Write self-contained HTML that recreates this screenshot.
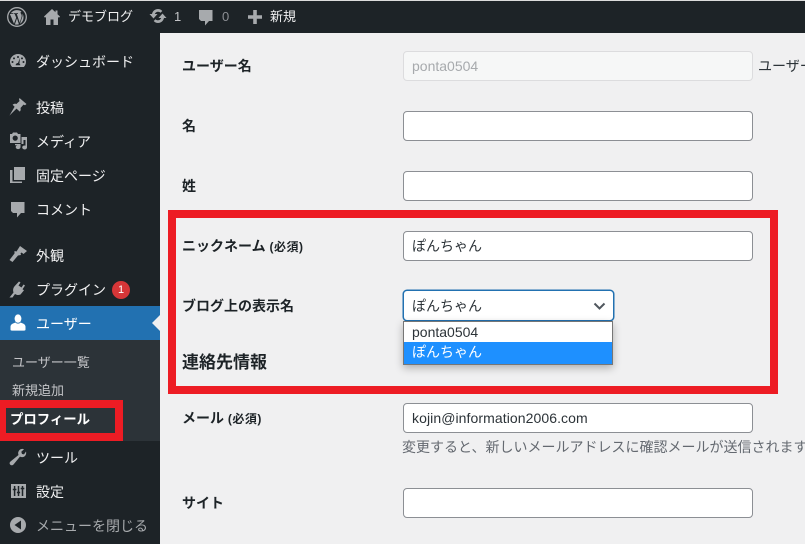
<!DOCTYPE html>
<html><head><meta charset="utf-8"><style>
html,body{margin:0;padding:0;width:805px;height:544px;overflow:hidden;background:#f0f0f1}
body{position:relative;font-family:"Liberation Sans","Noto Sans CJK JP",sans-serif;font-size:14px;color:#1d2327}
.a{position:absolute;white-space:nowrap}
.t{position:absolute;white-space:nowrap;line-height:20px}
.m{margin-top:1px}
.w{color:#f0f0f1}
.l{font-weight:700;left:182px;color:#1d2327}
.r{font-size:12px;letter-spacing:.5px}
.i{position:absolute;left:403px;width:350px;height:30px;box-sizing:border-box;background:#fff;border:1px solid #8c8f94;border-radius:4px;padding-left:8px;line-height:29px;color:#2c3338;overflow:hidden;white-space:nowrap}
svg{position:absolute;display:block}
.ic{fill:#a7aaad}
</style></head><body>
<div class="a" style="left:0;top:0;width:805px;height:33px;background:#1d2327"></div>
<div class="a" style="left:0;top:0;width:805px;height:1px;background:#dcdcdc"></div>
<div class="a" style="left:0;top:33px;width:160px;height:511px;background:#1d2327"></div>
<div class="a" style="left:0;top:306px;width:160px;height:34px;background:#2271b1"></div>
<div class="a" style="left:0;top:340px;width:160px;height:101px;background:#2c3338"></div>
<svg style="left:152px;top:315px" width="8" height="16"><path d="M8 0L0 8L8 16Z" fill="#f0f0f1"/></svg>

<!-- top bar -->
<svg style="left:7px;top:7px" width="20" height="20" viewBox="0 0 20 20"><circle cx="10" cy="10" r="9.3" fill="none" stroke="#a7aaad" stroke-width="1.3"/><path d="M3 7.2 7 16.8 9.2 10.6 7.7 7H6.6V6.2H11V7H9.8L12.7 15.8 14.3 10.8C15 8.6 14.6 7.6 13.8 6.5 13.2 5.6 13.7 4.8 14.6 4.6 12 2.4 6.5 2.4 3.8 6.2H6V7H3ZM10 11.2 7.9 17.4C9.2 17.8 10.6 17.7 11.9 17.3ZM15.5 6.6C15.7 8.5 15.5 9.6 14.8 11.4L13 16.8C16.4 14.8 17.6 10.2 15.5 6.6Z" fill="#a7aaad"/></svg>
<svg style="left:44px;top:9px" width="16" height="16" viewBox="0 0 16 16"><path d="M8 0L0 7.5 1 8.7 2 8V16H6.5V10.5H9.5V16H14V8L15 8.7 16 7.5 13.5 5.2V1.5H11.5V3.3Z" class="ic"/></svg>
<div class="t w" style="left:68px;top:7px;font-size:13px">デモブログ</div>
<svg style="left:149px;top:7px" width="18" height="19" viewBox="0 1 18 16"><path d="M9 1.5C6 1.5 3.6 3.6 3 6.5H.5L4.5 11 8.5 6.5H5.8C6.4 5 7.6 4.2 9 4.2 10 4.2 10.9 4.6 11.5 5.3L13.3 3.5C12.2 2.3 10.7 1.5 9 1.5ZM13.5 6L9.5 10.5H12.2C11.6 12 10.4 12.8 9 12.8 8 12.8 7.1 12.4 6.5 11.7L4.7 13.5C5.8 14.7 7.3 15.5 9 15.5 12 15.5 14.4 13.4 15 10.5H17.5Z" class="ic"/></svg>
<div class="t" style="left:174px;top:7px;font-size:13px;color:#c3c4c7">1</div>
<svg style="left:198px;top:10px" width="16" height="16" viewBox="0 0 16 16"><path d="M1 0H14.5V11H11L7 15.5V11H3L1 9Z" class="ic"/></svg>
<div class="t" style="left:222px;top:7px;font-size:13px;color:#8c8f94">0</div>
<svg style="left:248px;top:10px" width="14" height="14" viewBox="0 0 14 14"><path d="M5.2 0H8.8V5.2H14V8.8H8.8V14H5.2V8.8H0V5.2H5.2Z" class="ic"/></svg>
<div class="t w" style="left:270px;top:7px;font-size:13px">新規</div>

<!-- menu -->
<svg style="left:10px;top:54px" width="16" height="14" viewBox="0 0 16 14"><path d="M8 0C3.6 0 0 3.4 0 7.6 0 9.6.8 11.5 2.2 13H13.8C15.2 11.5 16 9.6 16 7.6 16 3.4 12.4 0 8 0ZM8 2A1 1 0 1 1 8 4 1 1 0 0 1 8 2ZM4 3.4A1 1 0 1 1 4 5.4 1 1 0 0 1 4 3.4ZM12 3.4A1 1 0 1 1 12 5.4 1 1 0 0 1 12 3.4ZM2.5 7A1 1 0 1 1 2.5 9 1 1 0 0 1 2.5 7ZM13.5 7A1 1 0 1 1 13.5 9 1 1 0 0 1 13.5 7ZM10 3.8L9.4 9.6C10 10 10.3 10.6 10.3 11.2H5.7C5.7 9.9 6.8 9 8 9Z" class="ic" fill-rule="evenodd"/></svg>
<div class="t w m" style="left:36px;top:51px">ダッシュボード</div>
<svg style="left:9px;top:98px" width="18" height="18" viewBox="0 0 18 18"><path d="M10.5 0L17.5 6 16 7.2 14.5 6.6 11.5 10C12 11.6 11.6 12.8 10.8 13.6L7.5 10.6 0.5 17.5 5.6 8.8 3.6 6.8C4.8 5.8 6 5.6 7.4 6L10.6 3 10 1.6Z" class="ic"/></svg>
<div class="t w m" style="left:36px;top:97px">投稿</div>
<svg style="left:9px;top:132px" width="18" height="18" viewBox="0 0 18 18"><path d="M1 2H3L4 .5H8L9 2H11.5V11H1ZM6.2 3.5A2.6 2.6 0 1 0 6.2 8.7 2.6 2.6 0 0 0 6.2 3.5ZM12.5 5H18V15.5A2.4 2 0 1 1 16.5 13.6V8H14.5V12H12.5ZM6 12H11.5V15A2.4 2 0 1 1 9.8 13.2H6Z" class="ic" fill-rule="evenodd"/></svg>
<div class="t w m" style="left:36px;top:131px">メディア</div>
<svg style="left:10px;top:167px" width="15" height="16" viewBox="0 0 15 16"><path d="M4 0H15V13H4ZM0 3H2.5V14.5H12V16H0Z" class="ic"/></svg>
<div class="t w m" style="left:36px;top:165px">固定ページ</div>
<svg style="left:10px;top:202px" width="16" height="16" viewBox="0 0 16 16"><path d="M1 0H14.5V11H11L7 15.5V11H3L1 9Z" class="ic"/></svg>
<div class="t w m" style="left:36px;top:199px">コメント</div>
<svg style="left:9px;top:246px" width="18" height="17" viewBox="0 0 18 17"><path d="M11 0L18 5 14.5 8 12.5 6.5 11.5 7.5 12 9 9 9.5 3.5 16 .5 14 5.5 7.5 5.5 5 7.5 5.5Z" class="ic"/></svg>
<div class="t w m" style="left:36px;top:245px">外観</div>
<svg style="left:9px;top:281px" width="18" height="17" viewBox="0 0 18 17"><path d="M10 .5L11.5 1.5 9.5 4.5 12.5 6.5 14.5 3.5 16 4.5 13.5 8.2 15 9.2 11.5 13.5C9.5 14.5 7.5 14 6 13L3.5 16.5H.5L4.5 11.5C3.8 9.5 4 7.5 5 6L6 4.8Z" class="ic"/></svg>
<div class="t w m" style="left:36px;top:279px">プラグイン</div>
<div class="a" style="left:112px;top:281px;width:18px;height:18px;border-radius:50%;background:#d63638;color:#fff;font-size:11px;line-height:18px;text-align:center">1</div>
<svg style="left:10px;top:314px" width="16" height="17" viewBox="0 0 16 17"><ellipse cx="8" cy="4.6" rx="3.4" ry="4.2" fill="#fff"/><path d="M5.5 8.5C3 9.5.8 10 .5 12.5V15.5C.5 16.3 1 16.6 2 16.6H14C15 16.6 15.5 16.3 15.5 15.5V12.5C15.2 10 13 9.5 10.5 8.5 9.5 10 6.5 10 5.5 8.5Z" fill="#fff"/></svg>
<div class="t m" style="left:36px;top:313px;color:#fff">ユーザー</div>
<div class="t m" style="left:12px;top:352px;font-size:13px;color:#c3c4c7">ユーザー一覧</div>
<div class="t m" style="left:12px;top:380px;font-size:13px;color:#c3c4c7">新規追加</div>
<div class="t m" style="left:10px;top:409px;font-size:13.4px;font-weight:700;color:#fff">プロフィール</div>
<svg style="left:9px;top:448px" width="18" height="18" viewBox="0 0 18 18"><path d="M17 3.5C17.6 6 16.5 8.4 14.2 9 13 9.3 12 9.2 11 8.6L4.5 16.5C3.5 17.5 2 17.5 1.2 16.6.3 15.7.4 14.3 1.5 13.5L9.5 7C8.9 5.5 9 4 10 2.6 11.2 1 13.4.5 15 1.2L12.3 3.8 13 6 15 6.4Z" class="ic"/></svg>
<div class="t w m" style="left:36px;top:447px">ツール</div>
<svg style="left:11px;top:484px" width="15" height="14" viewBox="0 0 15 14"><rect width="15" height="14" class="ic"/><path d="M3.6 2V12M1.8 5.5H5.4M7.5 2V12M5.9 8.5H9.1M11.5 2V12M9.7 4.5H13.3" fill="none" stroke="#1d2327" stroke-width="1.5"/></svg>
<div class="t w m" style="left:36px;top:481px">設定</div>
<svg style="left:10px;top:517px" width="16" height="16" viewBox="0 0 16 16"><path d="M8 0A8 8 0 1 0 8 16 8 8 0 0 0 8 0ZM11 3.5V12.5L4.5 8Z" class="ic" fill-rule="evenodd"/></svg>
<div class="t m" style="left:36px;top:515px;color:#a7aaad">メニューを閉じる</div>

<!-- form -->
<div class="t l" style="top:56px">ユーザー名</div>
<div class="i" style="top:51px;background:#f6f7f7;border-color:#dcdcde;color:#a7aaad">ponta0504</div>
<div class="t" style="left:758px;top:56px;width:47px;overflow:hidden;color:#2c3338">ユーザー名は変更できません。</div>
<div class="t l" style="top:116px">名</div>
<div class="i" style="top:111px"></div>
<div class="t l" style="top:176px">姓</div>
<div class="i" style="top:171px"></div>
<div class="t l" style="top:236px">ニックネーム <span class="r">(必須)</span></div>
<div class="i" style="top:231px">ぽんちゃん</div>
<div class="t l" style="top:296px">ブログ上の表示名</div>
<div class="i" style="top:290px;width:211px;height:31px;border-color:#2271b1;box-shadow:0 0 0 .5px #2271b1;line-height:30px">ぽんちゃん</div>
<svg style="left:593px;top:302px" width="13" height="9" viewBox="0 0 13 9"><path d="M1.5 1.5L6.5 6.5 11.5 1.5" fill="none" stroke="#50575e" stroke-width="2"/></svg>
<div class="a" style="left:403px;top:321px;width:210px;height:44px;box-sizing:border-box;background:#fff;border:1px solid #767676;box-shadow:0 3px 8px rgba(0,0,0,.28);color:#2c3338;line-height:20px;overflow:hidden">
<div style="height:20px;padding-left:8px">ponta0504</div>
<div style="height:22px;padding-left:8px;background:#1e90ff;color:#fff">ぽんちゃん</div>
</div>
<div class="t m" style="left:182px;top:352px;font-size:17px;font-weight:700;color:#1d2327">連絡先情報</div>
<div class="t l" style="top:408px">メール <span class="r">(必須)</span></div>
<div class="i" style="top:403px;letter-spacing:.08px">kojin@information2006.com</div>
<div class="t" style="left:402px;top:437px;width:403px;overflow:hidden;font-size:14px;color:#646970">変更すると、新しいメールアドレスに確認メールが送信されます。</div>
<div class="t l" style="top:493px">サイト</div>
<div class="i" style="top:488px"></div>

<!-- red annotation -->
<div class="a" style="left:168px;top:210px;width:610px;height:184px;box-sizing:border-box;border:8px solid #ed1c24"></div>
<div class="a" style="left:0;top:400px;width:123px;height:41px;box-sizing:border-box;border:8px solid #ed1c24;border-left-width:6px"></div>
</body></html>
